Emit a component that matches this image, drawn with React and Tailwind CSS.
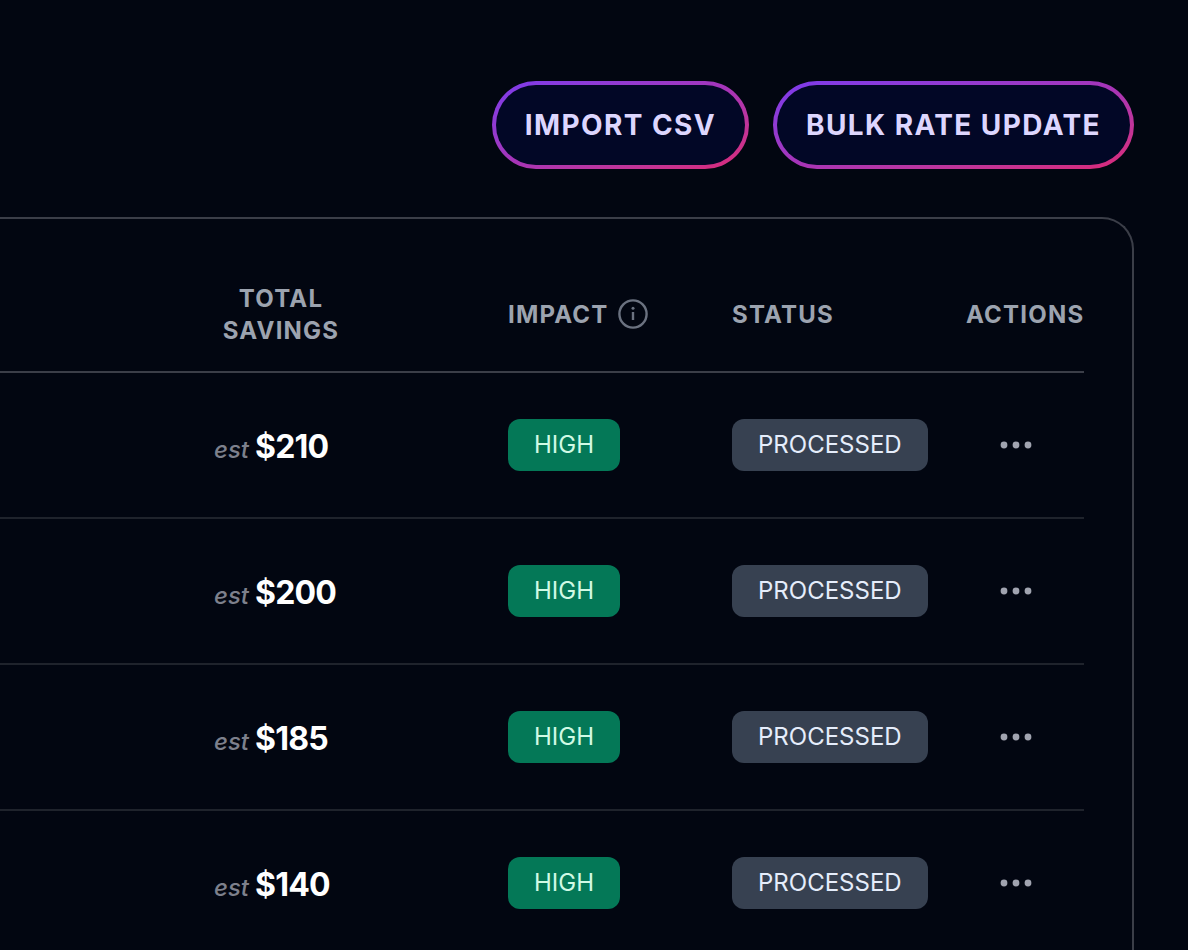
import React from 'react';

const rows = [
  { id: 1, savings: '$210', impact: 'HIGH', status: 'PROCESSED' },
  { id: 2, savings: '$200', impact: 'HIGH', status: 'PROCESSED' },
  { id: 3, savings: '$185', impact: 'HIGH', status: 'PROCESSED' },
  { id: 4, savings: '$140', impact: 'HIGH', status: 'PROCESSED' },
];

function GradientButton({ children }) {
  return (
    <button
      type="button"
      className="rounded-full bg-linear-to-br from-[#7c3aed] via-[#a634b8] to-[#db2777] p-1 text-[28px] leading-10 font-bold tracking-wider text-[#ddd6fe]"
    >
      <span className="block rounded-full bg-[#020726] px-[29px] py-5">{children}</span>
    </button>
  );
}

function InfoIcon() {
  return (
    <svg className="size-8" viewBox="0 0 32 32" fill="none" stroke="currentColor" strokeWidth="2.4" aria-hidden="true">
      <circle cx="16" cy="15" r="13.6" />
      <path d="M16 13v8" />
      <circle cx="16" cy="9.2" r="1.5" fill="currentColor" stroke="none" />
    </svg>
  );
}

function DotsIcon() {
  return (
    <svg className="size-8" viewBox="0 0 32 32" fill="currentColor" aria-hidden="true">
      <circle cx="4" cy="16" r="3.4" />
      <circle cx="16" cy="16" r="3.4" />
      <circle cx="28" cy="16" r="3.4" />
    </svg>
  );
}

export default function App() {
  return (
    <div className="h-screen overflow-hidden bg-[#020611] pr-[54px] font-['Inter',sans-serif]">
      {/* Toolbar */}
      <div className="flex justify-end gap-6 pt-[81px]">
        <GradientButton>IMPORT CSV</GradientButton>
        <GradientButton>BULK RATE UPDATE</GradientButton>
      </div>

      {/* Savings table */}
      <div className="mt-12 min-h-screen rounded-tr-[32px] border-t-2 border-r-2 border-[#3b3e48] pt-10 pr-12">
        <table className="w-full table-fixed border-separate border-spacing-0">
          <thead className="text-2xl leading-8 tracking-wider text-[#9ca3af]">
            <tr>
              <th className="border-b-2 border-[#3b3e48] py-6 pr-40 pl-[214px] text-center font-bold">
                TOTAL<br />SAVINGS
              </th>
              <th className="w-56 border-b-2 border-[#3b3e48] py-6 text-left font-bold">
                <span className="flex items-center gap-2">
                  IMPACT
                  <button type="button" aria-label="About impact" className="text-[#6b7280]">
                    <InfoIcon />
                  </button>
                </span>
              </th>
              <th className="w-[234px] border-b-2 border-[#3b3e48] py-6 text-left font-bold">STATUS</th>
              <th className="w-[118px] border-b-2 border-[#3b3e48] py-6 text-left font-bold">ACTIONS</th>
            </tr>
          </thead>
          <tbody>
            {rows.map((row) => (
              <tr key={row.id} className="h-[146px]">
                <td className="border-b-2 border-[#1f232c] pt-1 pl-[214px]">
                  <div className="flex items-baseline gap-1.5">
                    <span className="text-2xl font-medium text-[#7d808c] italic">est</span>
                    <span className="text-[32px] leading-10 font-bold tracking-tight text-white">{row.savings}</span>
                  </div>
                </td>
                <td className="border-b-2 border-[#1f232c]">
                  <span className="inline-flex h-[52px] items-center rounded-xl bg-[#047857] px-[26px] text-2xl text-[#d1fae5]">
                    {row.impact}
                  </span>
                </td>
                <td className="border-b-2 border-[#1f232c]">
                  <span className="inline-flex h-[52px] items-center rounded-xl bg-[#374151] px-[26px] text-2xl text-[#e5edfb]">
                    {row.status}
                  </span>
                </td>
                <td className="border-b-2 border-[#1f232c] pl-[34px]">
                  <button type="button" aria-label="Row actions" className="flex text-[#a1a4b0]">
                    <DotsIcon />
                  </button>
                </td>
              </tr>
            ))}
          </tbody>
        </table>
      </div>
    </div>
  );
}
